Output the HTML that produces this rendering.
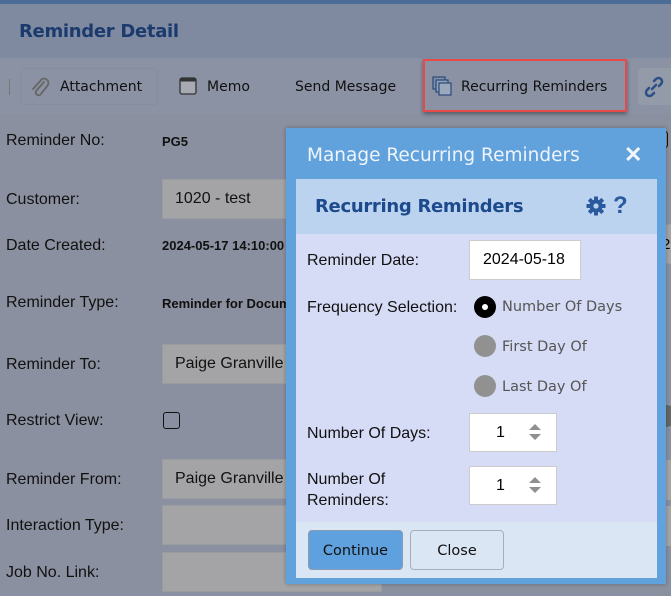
<!DOCTYPE html>
<html><head><meta charset="utf-8"><style>
*{box-sizing:border-box;margin:0;padding:0}
body{width:671px;height:596px;overflow:hidden;background:#8a909f;font-family:"Liberation Sans",Arial,sans-serif;position:relative}
.abs{position:absolute}
.os{font-family:"DejaVu Sans","Liberation Sans",sans-serif}
.lbl{position:absolute;left:6px;font-size:16px;color:#111}
.val{position:absolute;left:162px;font-size:13px;font-weight:bold;color:#111;white-space:nowrap;width:124px;overflow:hidden}
.inp{position:absolute;left:162px;width:220px;height:40px;background:#a4a4a6;border:1px solid #9a9ca2;font-size:16px;color:#111;padding:10px 12px}
</style></head><body>
<div class="abs" style="left:0;top:0;width:671px;height:4px;background:#4a6c96"></div>
<div class="abs" style="left:0;top:4px;width:671px;height:54px;background:#7f8aa0"></div>
<div class="abs os" style="left:19px;top:21px;font-size:18px;font-weight:bold;color:#1b3a6e;letter-spacing:-0.3px">Reminder Detail</div>
<div class="abs" style="left:0;top:58px;width:671px;height:56px;background:#8b92a4"></div>
<div class="abs" style="left:9px;top:79px;width:1px;height:16px;background:#777"></div>
<div class="abs" style="left:20px;top:68px;width:138px;height:37px;border:1px solid #878d9c;border-radius:3px"></div>
<svg class="abs" style="left:29px;top:76px" width="22" height="22" viewBox="0 0 22 22"><path d="M15 6 L7 15 a3 3 0 0 0 4 4 L19 9 a4.5 4.5 0 0 0 -6 -6 L4 13" fill="none" stroke="#666" stroke-width="1.8" stroke-linecap="round"/></svg>
<div class="abs os" style="left:60px;top:79px;font-size:14px;color:#111">Attachment</div>
<svg class="abs" style="left:179px;top:77px" width="18" height="18" viewBox="0 0 18 18"><rect x="1" y="1" width="16" height="16" rx="2" fill="#a7aab2" stroke="#333" stroke-width="1.3"/><rect x="1.5" y="1.5" width="15" height="3" fill="#333"/></svg>
<div class="abs os" style="left:207px;top:79px;font-size:14px;color:#111">Memo</div>
<div class="abs os" style="left:295px;top:79px;font-size:14px;color:#111">Send Message</div>
<div class="abs" style="left:423px;top:59px;width:204px;height:53px;border:2.5px solid #e84a4a;box-shadow:0 2px 4px rgba(0,0,0,.4)"></div>
<svg class="abs" style="left:432px;top:76px" width="20" height="20" viewBox="0 0 20 20"><rect x="1" y="1" width="12" height="12" fill="#7f8fa8" stroke="#2b4a78" stroke-width="1.2"/><rect x="4" y="4" width="12" height="12" fill="#8fa0b8" stroke="#2b4a78" stroke-width="1.2"/><rect x="7" y="7" width="12" height="12" fill="#9aa8bc" stroke="#2b4a78" stroke-width="1.2"/></svg>
<div class="abs os" style="left:461px;top:79px;font-size:14px;color:#111">Recurring Reminders</div>
<div class="abs" style="left:638px;top:68px;width:40px;height:37px;background:#939aa8;border-radius:4px"></div>
<svg class="abs" style="left:643px;top:76px" width="22" height="22" viewBox="0 0 22 22"><path d="M9 13 L13 9 M11 5 l2-2 a3.5 3.5 0 0 1 5 5 l-2 2 M11 17 l-2 2 a3.5 3.5 0 0 1 -5 -5 l2 -2" fill="none" stroke="#2c4f86" stroke-width="2.5" stroke-linecap="round"/></svg>

<div class="lbl" style="top:132px">Reminder No:</div><div class="val" style="top:134px">PG5</div>
<div class="lbl" style="top:191px">Customer:</div><div class="inp" style="top:179px">1020 - test</div>
<div class="lbl" style="top:237px">Date Created:</div><div class="val" style="top:238px">2024-05-17 14:10:00</div>
<div class="lbl" style="top:294px">Reminder Type:</div><div class="val" style="top:296px">Reminder for Documents</div>
<div class="lbl" style="top:356px">Reminder To:</div><div class="inp" style="top:344px">Paige Granville</div>
<div class="lbl" style="top:412px">Restrict View:</div>
<div class="abs" style="left:163px;top:412px;width:17px;height:17px;border:1.5px solid #111;border-radius:3px"></div>
<div class="lbl" style="top:471px">Reminder From:</div><div class="inp" style="top:459px">Paige Granville</div>
<div class="lbl" style="top:517px">Interaction Type:</div><div class="inp" style="top:505px"></div>
<div class="lbl" style="top:564px">Job No. Link:</div><div class="inp" style="top:552px"></div>
<div class="abs" style="left:656px;top:131px;width:12px;height:17px;border:1.5px solid #111;border-radius:3px"></div>
<div class="abs" style="left:640px;top:224px;width:40px;height:40px;background:#a4a4a6;border:1px solid #9a9ca2"></div>
<div class="abs" style="left:662px;top:236px;font-size:15px">2</div>
<div class="abs" style="left:655px;top:405px;width:22px;height:22px;border-radius:50%;background:#666"></div>
<div class="abs" style="left:640px;top:460px;width:40px;height:40px;background:#a4a4a6"></div>
<div class="abs" style="left:640px;top:506px;width:40px;height:40px;background:#a4a4a6"></div>

<!-- dialog -->
<div class="abs" style="left:286px;top:128px;width:380px;height:456px;background:#62a2dc;box-shadow:0 0 4px rgba(0,0,0,.3)"></div>
<div class="abs os" style="left:307px;top:145px;font-size:18.5px;color:#eef4fb">Manage Recurring Reminders</div>
<div class="abs" style="left:624px;top:142px;font-size:22px;font-weight:bold;color:#f2f6fb">✕</div>
<div class="abs" style="left:296px;top:179px;width:361px;height:55px;background:#bcd3f0"></div>
<div class="abs os" style="left:315px;top:196px;font-size:18px;font-weight:bold;color:#1c4a8c;letter-spacing:-0.3px">Recurring Reminders</div>
<svg class="abs" style="left:586px;top:196px" width="20" height="20" viewBox="0 0 20 20"><g fill="#2a5a9e"><circle cx="10" cy="10" r="6.5"/><g id="t"><rect x="8" y="0.5" width="4" height="4"/><rect x="8" y="15.5" width="4" height="4"/></g><use href="#t" transform="rotate(45 10 10)"/><use href="#t" transform="rotate(90 10 10)"/><use href="#t" transform="rotate(135 10 10)"/></g><circle cx="10" cy="10" r="2.6" fill="#bcd3f0"/></svg>
<div class="abs" style="left:613px;top:192px;font-size:24px;font-weight:bold;color:#2a5a9e">?</div>
<div class="abs" style="left:296px;top:234px;width:361px;height:288px;background:#d6dcf6"></div>
<div class="abs" style="left:307px;top:252px;font-size:16px;color:#111">Reminder Date:</div>
<div class="abs" style="left:469px;top:240px;width:112px;height:40px;background:#fff;border:1px solid #ccc;font-size:16px;padding:10px 0 0 13px">2024-05-18</div>
<div class="abs" style="left:307px;top:299px;font-size:16px;color:#111">Frequency Selection:</div>
<div class="abs" style="left:474px;top:296px;width:22px;height:22px;border-radius:50%;background:#000"></div>
<div class="abs" style="left:482px;top:304px;width:6px;height:6px;border-radius:50%;background:#fff"></div>
<div class="abs os" style="left:502px;top:299px;font-size:14.5px;color:#555">Number Of Days</div>
<div class="abs" style="left:474px;top:335px;width:22px;height:22px;border-radius:50%;background:#919191"></div>
<div class="abs os" style="left:502px;top:339px;font-size:14.5px;color:#555">First Day Of</div>
<div class="abs" style="left:474px;top:375px;width:22px;height:22px;border-radius:50%;background:#919191"></div>
<div class="abs os" style="left:502px;top:379px;font-size:14.5px;color:#555">Last Day Of</div>
<div class="abs" style="left:307px;top:425px;font-size:16px;color:#111">Number Of Days:</div>
<div class="abs" style="left:469px;top:413px;width:88px;height:39px;background:#fff;border:1px solid #ccc;font-size:16px;padding:10px 0 0 26px">1</div>
<svg class="abs" style="left:528px;top:422px" width="14" height="20" viewBox="0 0 14 20"><path d="M1 8 L7 2 L13 8Z M1 12 L7 18 L13 12Z" fill="#909090"/></svg>
<div class="abs" style="left:307px;top:469px;font-size:16px;color:#111;line-height:21px">Number Of<br>Reminders:</div>
<div class="abs" style="left:469px;top:466px;width:88px;height:39px;background:#fff;border:1px solid #ccc;font-size:16px;padding:10px 0 0 26px">1</div>
<svg class="abs" style="left:528px;top:475px" width="14" height="20" viewBox="0 0 14 20"><path d="M1 8 L7 2 L13 8Z M1 12 L7 18 L13 12Z" fill="#909090"/></svg>
<div class="abs" style="left:296px;top:522px;width:361px;height:56px;background:#dbe6f5"></div>
<div class="abs os" style="left:308px;top:530px;width:95px;height:40px;background:#5fa0de;border:1px solid #8a9ab0;border-radius:4px;font-size:14.5px;text-align:center;line-height:40px;color:#111">Continue</div>
<div class="abs os" style="left:410px;top:530px;width:94px;height:40px;background:#dbe6f5;border:1px solid #a8aeb8;border-radius:4px;font-size:14.5px;text-align:center;line-height:40px;color:#111">Close</div>
</body></html>
